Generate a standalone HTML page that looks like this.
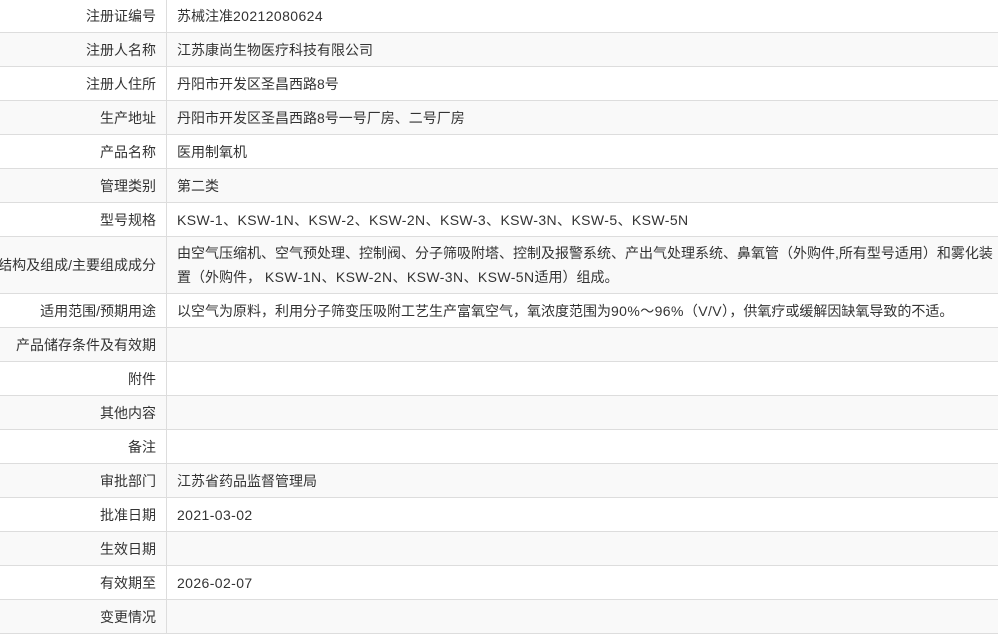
<!DOCTYPE html>
<html><head><meta charset="utf-8"><style>
body{margin:0;background:#fff;font-family:"Liberation Sans","Noto Sans CJK SC",sans-serif;font-size:14px;color:#333;}
table{border-collapse:collapse;width:998px;table-layout:fixed;}
td{border-bottom:1px solid #ddd;height:33px;padding:0;white-space:nowrap;overflow:hidden;}
tr.first td{height:32px;}
td.l{width:156px;text-align:right;padding-right:10px;border-right:1px solid #ddd;}
td.v{padding-left:10px;}
tr:nth-child(even) td{background:#f9f9f9;}
tr.tall td{height:56px;line-height:24px;}
.n{letter-spacing:0.4px;}
</style></head><body>
<table>
<tr class="first"><td class="l">注册证编号</td><td class="v">苏械注准<span class="n">20212080624</span></td></tr>
<tr><td class="l">注册人名称</td><td class="v">江苏康尚生物医疗科技有限公司</td></tr>
<tr><td class="l">注册人住所</td><td class="v">丹阳市开发区圣昌西路8号</td></tr>
<tr><td class="l">生产地址</td><td class="v">丹阳市开发区圣昌西路8号一号厂房、二号厂房</td></tr>
<tr><td class="l">产品名称</td><td class="v">医用制氧机</td></tr>
<tr><td class="l">管理类别</td><td class="v">第二类</td></tr>
<tr><td class="l">型号规格</td><td class="v"><span class="n">KSW-1、KSW-1N、KSW-2、KSW-2N、KSW-3、KSW-3N、KSW-5、KSW-5N</span></td></tr>
<tr class="tall"><td class="l" style="text-overflow:clip;direction:rtl">结构及组成/主要组成成分</td><td class="v">由空气压缩机、空气预处理、控制阀、分子筛吸附塔、控制及报警系统、产出气处理系统、鼻氧管（外购件,所有型号适用）和雾化装<br>置（外购件， <span class="n">KSW-1N、KSW-2N、KSW-3N、KSW-5N</span>适用）组成。</td></tr>
<tr><td class="l">适用范围/预期用途</td><td class="v">以空气为原料，利用分子筛变压吸附工艺生产富氧空气，氧浓度范围为<span class="n">90%～96%（V/V）</span>，供氧疗或缓解因缺氧导致的不适。</td></tr>
<tr><td class="l">产品储存条件及有效期</td><td class="v"></td></tr>
<tr><td class="l">附件</td><td class="v"></td></tr>
<tr><td class="l">其他内容</td><td class="v"></td></tr>
<tr><td class="l">备注</td><td class="v"></td></tr>
<tr><td class="l">审批部门</td><td class="v">江苏省药品监督管理局</td></tr>
<tr><td class="l">批准日期</td><td class="v"><span class="n">2021-03-02</span></td></tr>
<tr><td class="l">生效日期</td><td class="v"></td></tr>
<tr><td class="l">有效期至</td><td class="v"><span class="n">2026-02-07</span></td></tr>
<tr><td class="l">变更情况</td><td class="v"></td></tr>
</table>
</body></html>
